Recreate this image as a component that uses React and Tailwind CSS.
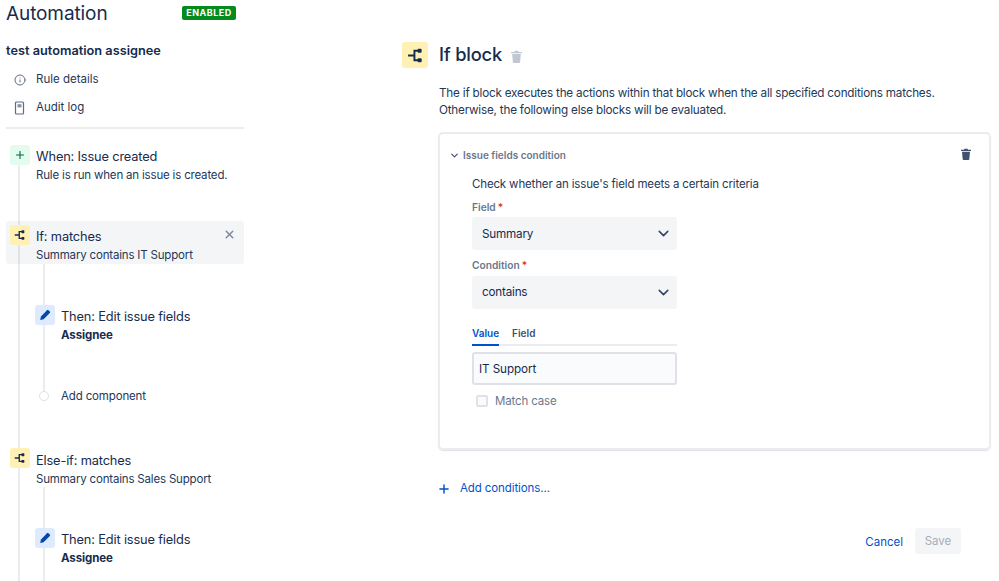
import { ChevronDown, Info, Plus, X } from "lucide-react";

const BranchIcon = ({ size = 12 }) => (
  <svg width={size} height={size} viewBox="0 0 16 16" fill="none" className="text-[#172b4d]">
    <path d="M1 8h6M7 8V3.5h4M7 8v4.5h4" stroke="currentColor" strokeWidth="1.8" />
    <rect x="10" y="1.7" width="3.8" height="3.8" rx="1" fill="currentColor" />
    <rect x="10" y="10.5" width="3.8" height="3.8" rx="1" fill="currentColor" />
  </svg>
);

const PencilIcon = () => (
  <svg width="12" height="12" viewBox="0 0 12 12" className="text-[#0747a6]">
    <path d="M8 1.2a1 1 0 0 1 1.4 0l1.4 1.4a1 1 0 0 1 0 1.4L4.6 10.2 1.2 11l.8-3.4z" fill="currentColor" />
  </svg>
);

const TrashIcon = ({ className }) => (
  <svg width="12" height="12" viewBox="0 0 12 12" className={className}>
    <path d="M4.5 0.8h3l.5 1h3v1.2H1V1.8h3zM2 3.8h8l-.7 7.4a.8.8 0 0 1-.8.7h-5a.8.8 0 0 1-.8-.7z" fill="currentColor" />
  </svg>
);

const DocIcon = () => (
  <svg width="12" height="14" viewBox="0 0 12 14" fill="none" className="text-[#5e6c84]">
    <rect x="1.5" y="1" width="8" height="12" rx="1" stroke="currentColor" strokeWidth="1.2" />
    <path d="M3.5 3.2h4v3.2h-4z" fill="currentColor" opacity="0.75" />
  </svg>
);

const Step = ({ icon, color, title, children, className = "", textClass = "pt-[1px]" }) => (
  <div className={`flex ${className}`}>
    <div className={`flex h-[20px] w-[20px] shrink-0 items-center justify-center rounded-[3px] ${color}`}>
      {icon}
    </div>
    <div className={`ml-[6px] min-w-0 flex-1 ${textClass}`}>
      <div className="text-[12.8px] leading-[21px] tracking-[-0.15px] whitespace-nowrap">{title}</div>
      {children}
    </div>
  </div>
);

const Sub = ({ children }) => (
  <div className="text-[11.5px] leading-[16px] tracking-[-0.18px] whitespace-nowrap text-[#253858]">{children}</div>
);

const Select = ({ label, value, labelGap = "mt-[2px]", valueClass = "pt-[2px]" }) => (
  <div>
    <div className="flex h-[16px] items-center pt-[1px] text-[10.2px] font-semibold text-[#6b778c]">
      {label}
      <span className="ml-[2px] text-[#de350b]">*</span>
    </div>
    <div className={`${labelGap} flex h-[33px] w-[205px] items-center justify-between rounded-[3px] bg-[#f4f5f7] pl-[10px] pr-[5px] text-[11.7px] tracking-[-0.2px]`}>
      <span className={valueClass}>{value}</span>
      <ChevronDown size={17} strokeWidth={2.2} className="text-[#344563]" />
    </div>
  </div>
);

const App = () => {
  return (
    <div className="flex h-[581px] w-[999px] overflow-hidden bg-white text-[#172b4d] [font-family:Inter,sans-serif]">
      {/* sidebar */}
      <aside className="ml-[6px] w-[238px] shrink-0">
        <div className="flex h-[26px] w-[230px] items-center justify-between">
          <h1 className="pt-[1px] text-[19px] leading-[26px] tracking-[-0.1px]">Automation</h1>
          <span className="mt-[-1px] flex h-[14px] w-[54px] items-center justify-center rounded-[2px] bg-[#058a1e] text-[9px] font-bold tracking-[0.5px] text-white">
            ENABLED
          </span>
        </div>
        <div className="mt-[15px] h-[20px] text-[12.75px] font-semibold leading-[20px]">
          test automation assignee
        </div>
        <div className="mt-[8px] flex h-[20px] items-center pl-[8px] pt-[2px] text-[11.5px] text-[#253858]">
          <span className="flex w-[22px]"><Info size={12} className="text-[#5e6c84]" /></span>
          Rule details
        </div>
        <div className="mt-[8px] flex h-[20px] items-center pl-[8px] pt-[1px] text-[11.5px] text-[#253858]">
          <span className="flex w-[22px]"><DocIcon /></span>
          Audit log
        </div>
        <div className="mt-[10px] h-[2px] bg-[#ebecf0]" />

        {/* rule tree */}
        <div className="ml-[12px] mt-[16px] h-[460px] border-l-2 border-[#ebecf0]">
          <Step
            className="-ml-[10px] h-[37px] w-[229px]"
            color="bg-[#e3fcef]"
            icon={<Plus size={12} strokeWidth={2.2} className="text-[#006644]" />}
            title="When: Issue created"
          >
            <Sub>Rule is run when an issue is created.</Sub>
          </Step>

          <div className="-ml-[14px] mt-[39px] flex h-[43px] w-[238px] rounded-[3px] bg-[#091e420b] pl-[4px] pt-[4px]">
            <Step
              className="flex-1"
              color="bg-[#fff0b3]"
              icon={<BranchIcon />}
              title="If: matches"
              textClass="pt-[0.5px]"
            >
              <Sub>Summary contains IT Support</Sub>
            </Step>
            <X size={13} strokeWidth={2.5} className="mr-[8px] mt-[3px] text-[#7a869a]" />
          </div>

          <div className="ml-[23px] h-[130px] border-l-2 border-[#ebecf0]">
            <Step
              className="-ml-[10px] pt-[41px]"
              color="bg-[#deebff]"
              icon={<PencilIcon />}
              title="Then: Edit issue fields"
            >
              <div className="text-[11.5px] font-bold leading-[16px] tracking-[-0.1px]">Assignee</div>
            </Step>
            <div className="mt-[43px] flex h-[20px] items-center text-[11.5px] tracking-[-0.15px] text-[#253858]">
              <span className="-ml-[6px] h-[10px] w-[10px] rounded-full border border-[#dfe1e6] bg-white" />
              <span className="ml-[12px] whitespace-nowrap pt-[2px]">Add component</span>
            </div>
          </div>

          <Step
            className="-ml-[10px] mt-[54px] w-[229px]"
            color="bg-[#fff0b3]"
            icon={<BranchIcon />}
            title="Else-if: matches"
            textClass="pt-[2px]"
          >
            <Sub>Summary contains Sales Support</Sub>
          </Step>

          <div className="ml-[23px] h-[100px] border-l-2 border-[#ebecf0]">
            <Step
              className="-ml-[10px] pt-[41px]"
              color="bg-[#deebff]"
              icon={<PencilIcon />}
              title="Then: Edit issue fields"
            >
              <div className="text-[11.5px] font-bold leading-[16px] tracking-[-0.1px]">Assignee</div>
            </Step>
          </div>
        </div>
      </aside>

      {/* if block form */}
      <main className="ml-[158px] w-[589px] pt-[42px]">
        <div className="flex items-center">
          <div className="flex h-[26px] w-[26px] items-center justify-center rounded-[3px] bg-[#fff0b3]">
            <BranchIcon size={17} />
          </div>
          <h2 className="ml-[11px] mt-[-2px] text-[18.3px] font-medium leading-[26px] tracking-[-0.2px]">If block</h2>
          <TrashIcon className="ml-[8px] mt-[2px] h-[13px] w-[13px] text-[#c1c7d0]" />
        </div>

        <div className="ml-[37px] mt-[17px] text-[11.7px] leading-[17px] tracking-[-0.2px] text-[#253858]">
          <p className="whitespace-nowrap">The if block executes the actions within that block when the all specified conditions matches.</p>
          <p className="whitespace-nowrap">Otherwise, the following else blocks will be evaluated.</p>
        </div>

        <div className="ml-[36px] mt-[13px] h-[318px] w-[553px] rounded-[5px] border-2 border-[#ebecf0] px-[9px] pt-[12px] shadow-[0_1px_1px_#dfe1e6]">
          <div className="flex h-[18px] items-center justify-between">
            <div className="flex items-center text-[10px] font-semibold text-[#6b778c]">
              <ChevronDown size={11} strokeWidth={2.6} className="text-[#42526e]" />
              <span className="ml-[3px]">Issue fields condition</span>
            </div>
            <TrashIcon className="mr-[8px] mt-[-2px] text-[#42526e]" />
          </div>
          <div className="ml-[23px]">
            <p className="mt-[11px] h-[18px] text-[11.5px] leading-[18px] tracking-[-0.15px] text-[#253858]">
              Check whether an issue's field meets a certain criteria
            </p>
            <div className="mt-[6px]">
              <Select label="Field" value="Summary" />
            </div>
            <div className="mt-[7px]">
              <Select label="Condition" value="contains" labelGap="mt-[3px]" valueClass="pt-[1px]" />
            </div>
            <div className="mt-[16px] flex h-[21px] w-[205px] gap-[13px] border-b-2 border-[#ebecf0] pt-[1px] text-[10px] font-semibold">
              <span className="-mb-[2px] border-b-2 border-[#0052cc] text-[#0052cc]">Value</span>
              <span className="text-[#42526e]">Field</span>
            </div>
            <div className="mt-[6px] flex h-[33px] w-[205px] items-center rounded-[3px] border-2 border-[#dfe1e6] bg-[#fafbfc] pl-[5px] pt-[2px] text-[11.7px] tracking-[-0.1px]">
              IT Support
            </div>
            <div className="ml-[4px] mt-[9px] flex h-[14px] items-center text-[11.5px] tracking-[-0.15px] text-[#6b778c]">
              <span className="h-[12px] w-[12px] rounded-[2px] border-2 border-[#dfe1e6] bg-[#fafbfc]" />
              <span className="ml-[7px] pt-[2px]">Match case</span>
            </div>
          </div>
        </div>

        <div className="ml-[36px] mt-[29px] flex h-[20px] items-center text-[11.5px] tracking-[-0.1px] text-[#0052cc]">
          <Plus size={14} strokeWidth={2.5} className="-ml-[1px]" />
          <span className="ml-[9px]">Add conditions...</span>
        </div>

        <div className="mr-[30px] mt-[29px] flex items-center justify-end text-[11.5px]">
          <span className="pt-[3px] text-[#0052cc]">Cancel</span>
          <span className="ml-[12px] flex h-[26px] w-[46px] items-center justify-center rounded-[3px] bg-[#f4f5f7] pt-[1px] text-[#a5adba]">
            Save
          </span>
        </div>
      </main>
    </div>
  );
};

export default App;
